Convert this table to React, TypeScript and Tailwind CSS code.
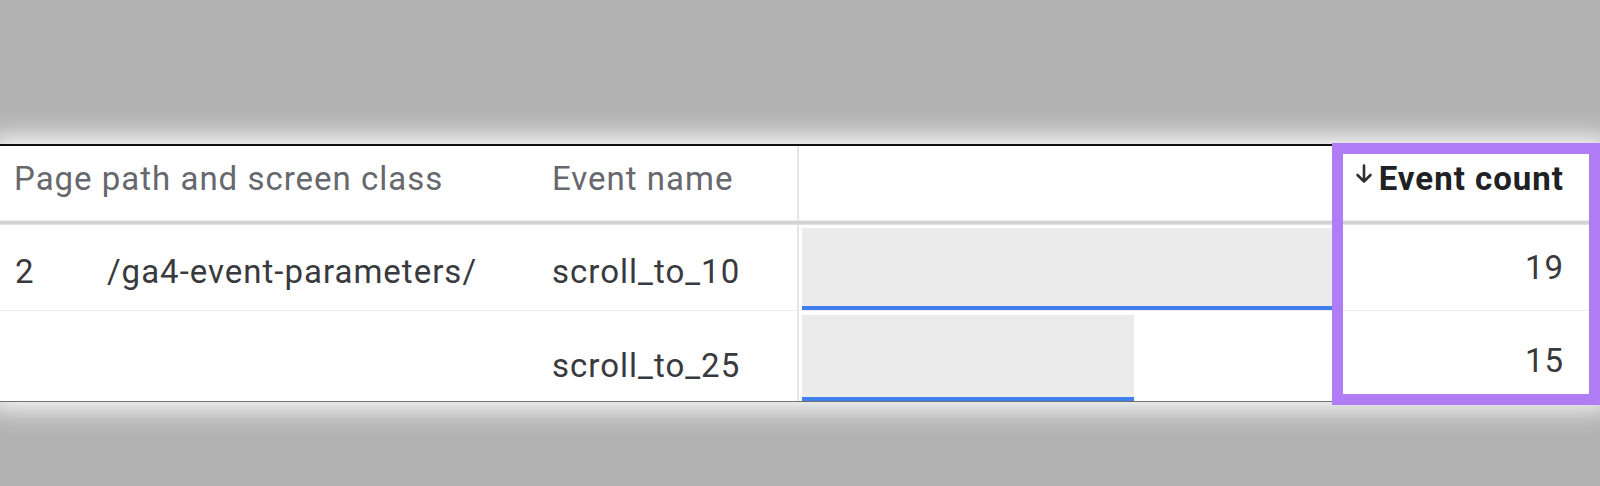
import type { ReactNode } from "react";

// Two rows of a GA4 "Event count" breakdown, with the metric column highlighted.
const rows = [
  { rank: "2", path: "/ga4-event-parameters/", event: "scroll_to_10", count: 19, bar: "w-full", pt: "pt-[3px]" },
  { rank: "", path: "", event: "scroll_to_25", count: 15, bar: "w-[332px]", pt: "pt-[4px]" },
];

const cols = "grid grid-cols-[538px_259px_535px_1fr]";

function Cell({ className, children }: { className?: string; children?: ReactNode }) {
  return <div className={`min-w-0 ${className ?? ""}`}>{children}</div>;
}

function SortArrow() {
  return (
    <svg width="18" height="20" viewBox="0 0 18 20" fill="none" className="mt-[4px] shrink-0">
      <path d="M9 1.5v16M2.5 11l6.5 6.5 6.5-6.5" stroke="#2f3133" strokeWidth="2.6" strokeLinecap="round" strokeLinejoin="round" />
    </svg>
  );
}

export default function App() {
  return (
    <div className="h-[486px] w-full overflow-hidden bg-[#b3b3b3] pt-[144px] font-['Roboto',sans-serif] text-[33px] leading-[38px] tracking-[1px]">
      <div className="relative border-t-2 border-b border-t-[#111] border-b-[#707070] bg-white shadow-[0_0_22px_8px_rgba(255,255,255,0.9)]">
        {/* header */}
        <div className={`${cols} h-[74px] text-[#66686d]`}>
          <Cell className="pl-[14px] pt-[14px]">Page path and screen class</Cell>
          <Cell className="pl-[14px] pt-[14px]">Event name</Cell>
          <Cell className="border-l-2 border-[#e6e6e6]" />
          <Cell className="flex justify-end gap-[6px] pr-[36px] pt-[14px] font-bold text-[#202124] tracking-[1px]">
            <SortArrow />
            <span>Event count</span>
          </Cell>
        </div>
        <div className="h-[5px] bg-linear-to-b from-[#ededed] via-[#cdcdcd] to-[#e4e4e4]" />

        {rows.map((r, i) => (
          <div
            key={r.event}
            className={`${cols} text-[#383a3e] ${i === 0 ? "h-[86px] border-b border-[#ececec]" : "h-[90px]"}`}
          >
            <Cell className={`flex pl-[15px] ${i === 0 ? "pt-[28px]" : "pt-[36px]"}`}>
              <span className="w-[92px]">{r.rank}</span>
              <span>{r.path}</span>
            </Cell>
            <Cell className={`pl-[14px] ${i === 0 ? "pt-[28px]" : "pt-[36px]"}`}>{r.event}</Cell>
            <Cell className={`flex border-l-2 border-[#e6e6e6] pl-[3px] ${r.pt}`}>
              <div className={`flex flex-col ${r.bar}`}>
                <div className="flex-1 bg-[#ebebeb]" />
                <div className="h-[4px] bg-[#3f80ee]" />
              </div>
            </Cell>
            <Cell className={`pr-[36px] text-right ${i === 0 ? "pt-[24px]" : "pt-[31px]"}`}>{r.count}</Cell>
          </div>
        ))}

        {/* purple highlight around the metric column */}
        <div className="pointer-events-none absolute -top-[3px] -bottom-[4px] right-0 w-[268px] border-[11px] border-[#b17df6]" />
      </div>
    </div>
  );
}
